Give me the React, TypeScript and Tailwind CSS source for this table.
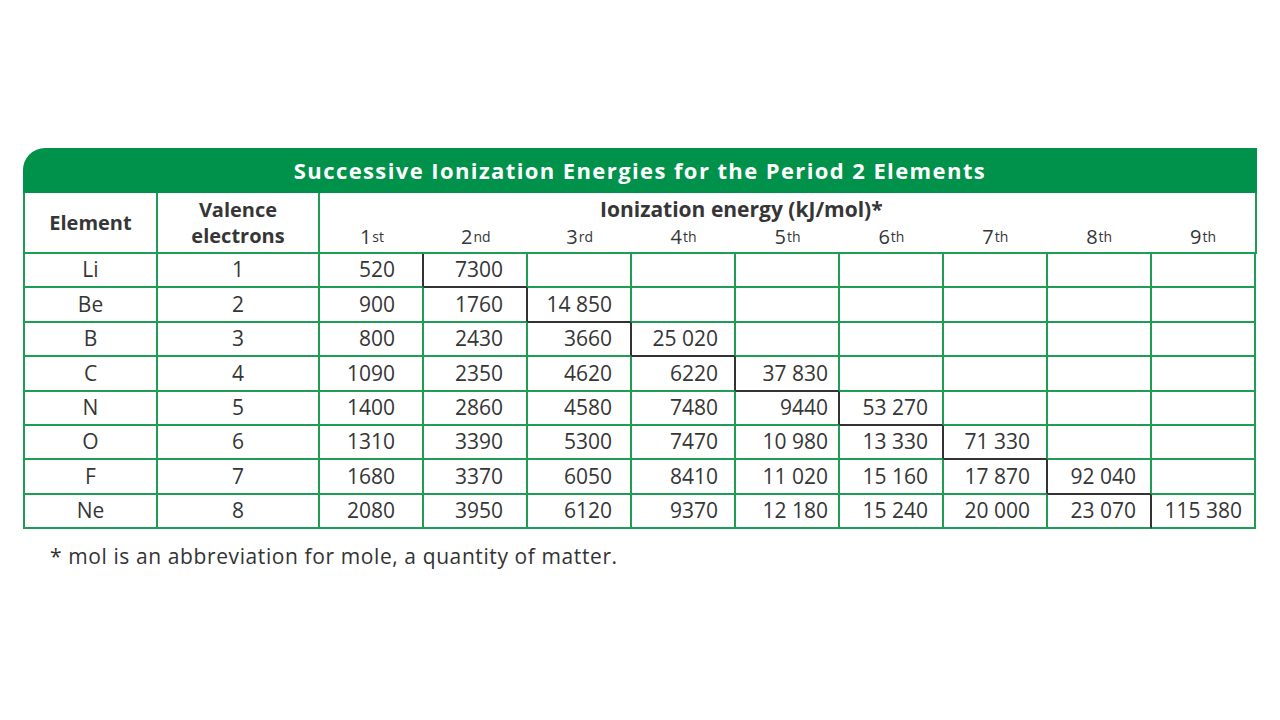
const rows: { el: string; v: number; e: string[] }[] = [
  { el: "Li", v: 1, e: ["520", "7300"] },
  { el: "Be", v: 2, e: ["900", "1760", "14 850"] },
  { el: "B", v: 3, e: ["800", "2430", "3660", "25 020"] },
  { el: "C", v: 4, e: ["1090", "2350", "4620", "6220", "37 830"] },
  { el: "N", v: 5, e: ["1400", "2860", "4580", "7480", "9440", "53 270"] },
  { el: "O", v: 6, e: ["1310", "3390", "5300", "7470", "10 980", "13 330", "71 330"] },
  { el: "F", v: 7, e: ["1680", "3370", "6050", "8410", "11 020", "15 160", "17 870", "92 040"] },
  { el: "Ne", v: 8, e: ["2080", "3950", "6120", "9370", "12 180", "15 240", "20 000", "23 070", "115 380"] },
];

const ordinals = [
  ["1", "st"], ["2", "nd"], ["3", "rd"], ["4", "th"], ["5", "th"],
  ["6", "th"], ["7", "th"], ["8", "th"], ["9", "th"],
];

// right padding of each ionization column, as measured
const padRight = ["pr-[27px]", "pr-[23px]", "pr-[18px]", "pr-[16px]", "pr-[10px]", "pr-[14px]", "pr-[16px]", "pr-[14px]", "pr-[12px]"];

const App = () => {
  return (
    <div
      className="w-[1280px] h-[720px] bg-white pt-[148px] pl-[23px] text-[#363636]"
      style={{ fontFamily: '"Open Sans", "Noto Sans", sans-serif' }}
    >
      <div className="w-[1234px]">
        {/* Title bar */}
        <div className="h-[45px] bg-[#00924a] rounded-tl-[22px] flex items-center justify-center text-white font-bold text-[22px] tracking-[1.4px]">
          Successive Ionization Energies for the Period 2 Elements
        </div>

        <div className="border-l-2 border-[#1f9d55]">
          {/* Header row */}
          <div className="grid grid-cols-[133px_162px_1fr] h-[61px]">
            <div className="border-r-2 border-b-2 border-[#1f9d55] flex items-center justify-center font-bold text-[20px]">
              Element
            </div>
            <div className="border-r-2 border-b-2 border-[#1f9d55] flex flex-col items-center justify-center font-bold text-[20px] leading-[26px]">
              <span>Valence</span>
              <span>electrons</span>
            </div>
            <div className="border-r-2 border-b-2 border-[#1f9d55] flex flex-col pt-[3px]">
              <div className="pl-[280px] font-bold text-[21px] leading-[27px]">
                Ionization energy (kJ/mol)*
              </div>
              <div className="grid grid-cols-9 text-[20px] leading-[27px]">
                {ordinals.map(([n, s]) => (
                  <div key={n + s} className="text-center">
                    {n}
                    <sup className="text-[14px] leading-none relative -top-[2px] ml-[1px]">{s}</sup>
                  </div>
                ))}
              </div>
            </div>
          </div>

          {/* Data rows */}
          {rows.map((r, i) => (
            <div key={r.el} className="grid grid-cols-[133px_162px_repeat(9,104px)] h-[34.4px] text-[21px]">
              <div className="border-r-2 border-b-2 border-[#1f9d55] flex items-center justify-center">{r.el}</div>
              <div className="border-r-2 border-b-2 border-[#1f9d55] flex items-center justify-center">{r.v}</div>
              {padRight.map((pr, c) => {
                const rightBlack = c === i;
                const bottomBlack = c === i + 1 && i < rows.length - 1;
                return (
                  <div
                    key={c}
                    className={`border-r-2 border-b-2 flex items-center justify-end ${pr} ${
                      rightBlack ? "border-r-[#333333]" : "border-r-[#1f9d55]"
                    } ${bottomBlack ? "border-b-[#333333]" : "border-b-[#1f9d55]"}`}
                  >
                    {r.e[c] ?? ""}
                  </div>
                );
              })}
            </div>
          ))}
        </div>

        <p className="mt-[12px] pl-[27px] text-[21px] tracking-[0.6px] text-[#333333]">
          * mol is an abbreviation for mole, a quantity of matter.
        </p>
      </div>
    </div>
  );
};

export default App;
